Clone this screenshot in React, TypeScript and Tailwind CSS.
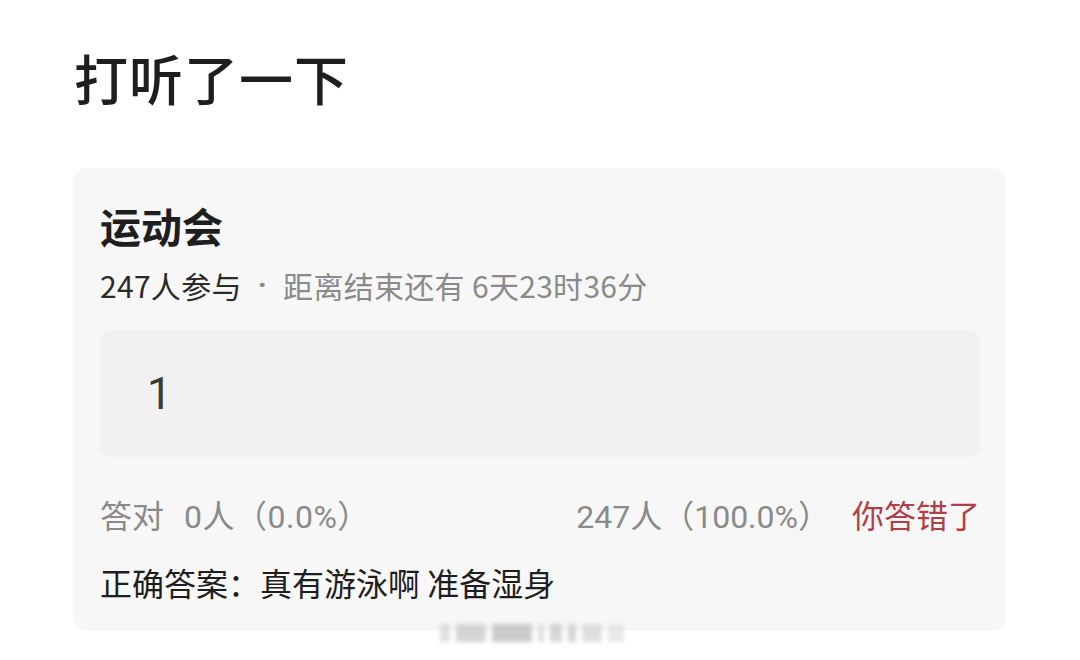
import React from "react";

const F = { fontFamily: '"Noto Sans CJK SC", "Noto Sans", sans-serif' };
const R = { fontFamily: 'Roboto, "Noto Sans CJK SC", sans-serif' };

export default function App() {
  return (
    <div className="w-[1080px] h-[660px] bg-white overflow-hidden relative" style={F}>
      <div className="pt-[51px] pl-[74px] text-[54px] leading-[54px] font-medium text-[#1e1e1e] tracking-[1px]">
        打听了一下
      </div>
      <div className="ml-[73px] mt-[63px] w-[933px] rounded-[14px] bg-[#f7f7f7] pt-[37px] pb-[34px] pl-[27px] pr-[26px]">
        <div className="text-[41px] leading-[40px] font-bold text-[#1e1e1e]">运动会</div>
        <div className="mt-[25px] flex items-center text-[30px] leading-[30px] text-[#8a8a8a] tracking-[0.3px]">
          <span className="text-[#2a2a2a]">247人参与</span>
          <span className="mx-[16px] font-bold" style={R}>·</span>
          <span>距离结束还有 6天23时36分</span>
        </div>
        <div className="mt-[30px] h-[127px] rounded-[10px] bg-[#f1f1f1] flex items-center pl-[47px] text-[44px] text-[#383838]" style={R}>
          1
        </div>
        <div className="mt-[44px] flex items-center text-[32px] leading-[32px] text-[#8a8a8a]" style={R}>
          <span>答对</span>
          <span className="ml-[20px] tracking-[0.5px]">0人（0.0%）</span>
          <span className="ml-auto">247人（100.0%）</span>
          <span className="ml-[22px] text-[#b03f48]">你答错了</span>
        </div>
        <div className="mt-[34px] text-[32px] leading-[30px] text-[#1e1e1e]">
          正确答案：真有游泳啊 准备湿身
        </div>
      </div>
      <div className="absolute left-[440px] top-[624px] flex gap-[6px] blur-[2px] opacity-60">
        <div className="w-[10px] h-[18px] bg-[#ccc]" />
        <div className="w-[30px] h-[18px] bg-[#bbb]" />
        <div className="w-[40px] h-[18px] bg-[#aaa]" />
        <div className="w-[6px] h-[18px] bg-[#ccc]" />
        <div className="w-[12px] h-[18px] bg-[#bbb]" />
        <div className="w-[8px] h-[18px] bg-[#bbb]" />
        <div className="w-[20px] h-[18px] bg-[#ccc]" />
        <div className="w-[16px] h-[18px] bg-[#ddd]" />
      </div>
    </div>
  );
}
